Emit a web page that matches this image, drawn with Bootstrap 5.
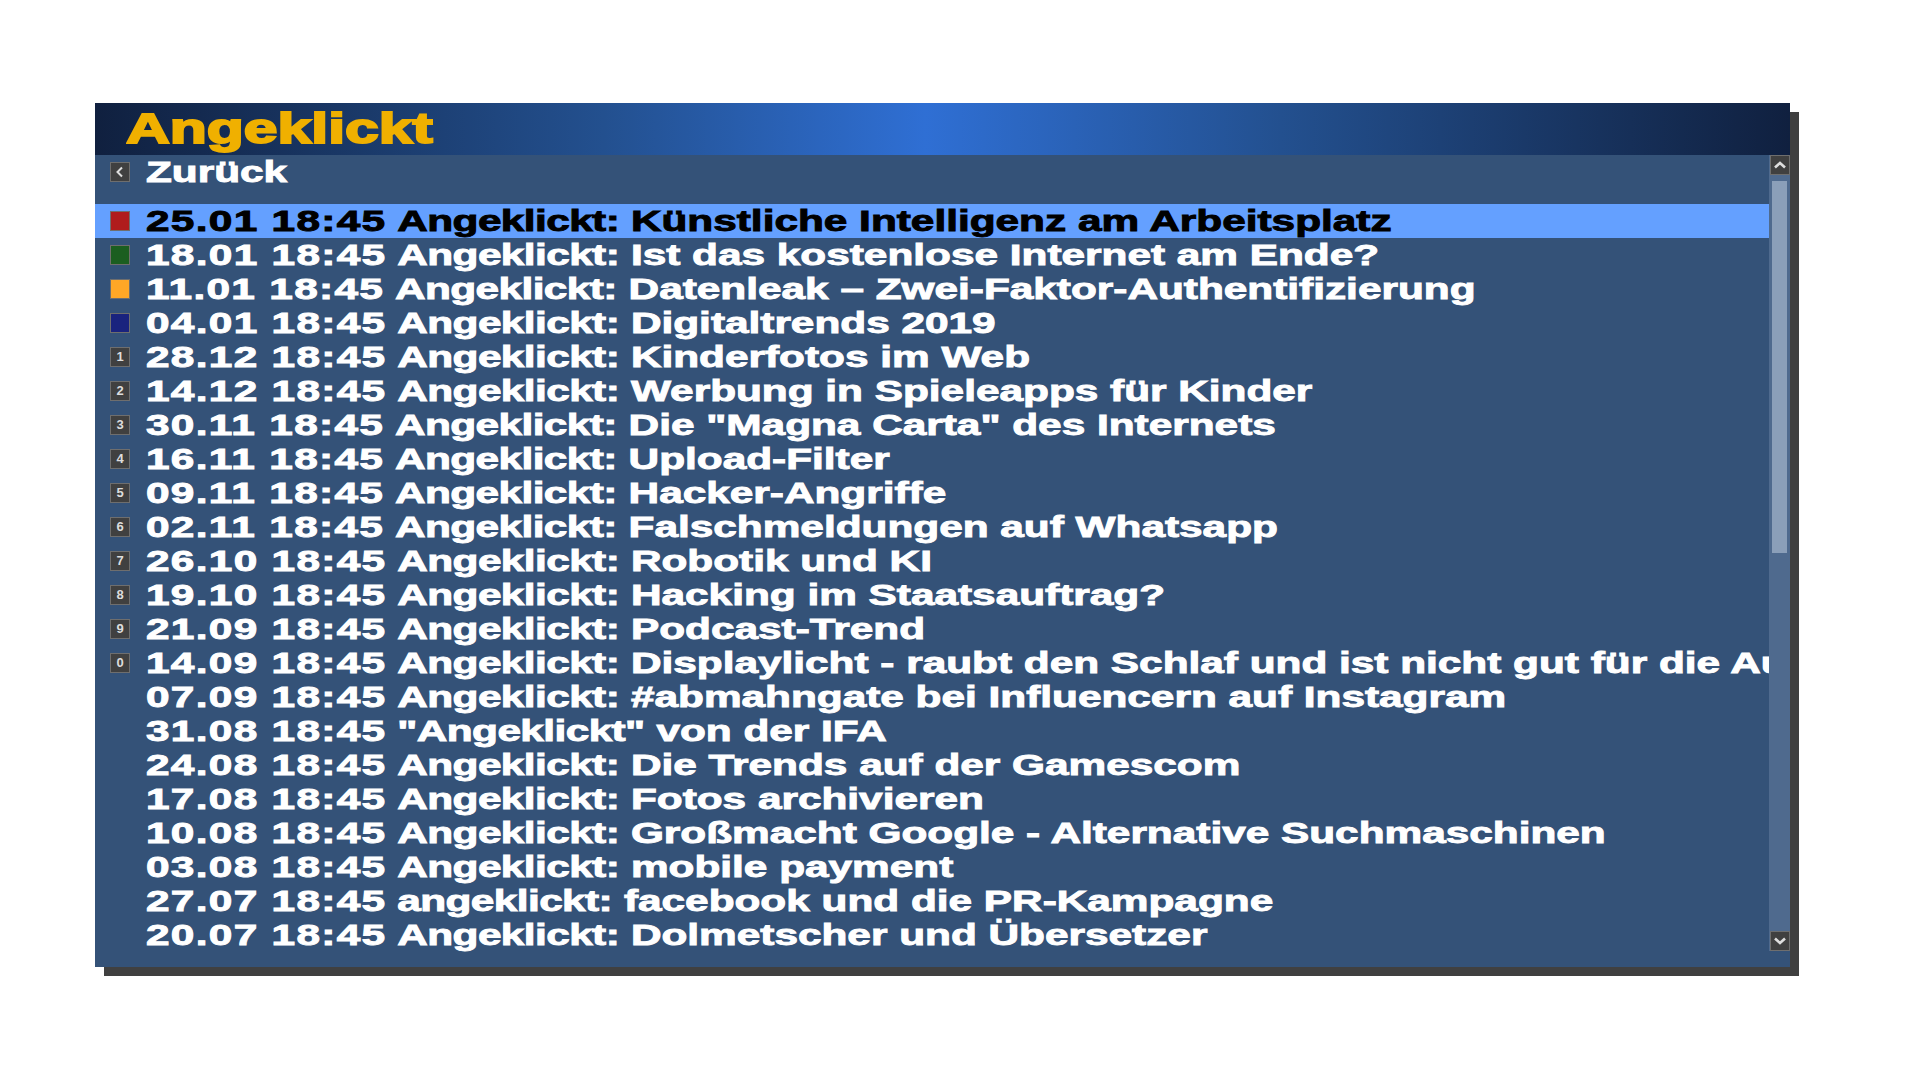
<!DOCTYPE html>
<html lang="de">
<head>
    <meta charset="UTF-8">
    <title>Angeklickt</title>
    <link href="https://cdn.jsdelivr.net/npm/bootstrap@5.3.0/dist/css/bootstrap.min.css" rel="stylesheet">
    <style>
        body { background: #fff; font-family: "Liberation Sans", Arial, sans-serif; }
        .page-wrap { min-height: 100vh; padding: 103px 0 0 95px; }
        .tv-panel { width: 1695px; height: 864px; background: #345278; box-shadow: 9px 9px 0 #404040; }
        .tv-head { height: 52px; background: linear-gradient(90deg, #10203f 0%, #23508f 30%, #2f6fd4 49%, #23508f 70%, #10203f 100%); }
        .tv-title { margin-left: 31px; color: #f0b000; font-size: 43px; line-height: 51px; font-weight: 700; -webkit-text-stroke: 2px #f0b000; transform: scaleX(1.41); transform-origin: left center; white-space: nowrap; width: 240px; }
        .tv-list { width: 1674px; }
        .tv-row { height: 34px; padding-left: 15px; color: #fff; overflow: hidden; }
        .tv-row.back-row { margin-bottom: 15px; }
        .tv-row.active-row { background: #64a0ff; color: #000; }
        .tv-key { width: 20px; height: 20px; flex: none; margin-right: 16px; background: #404040; border: 1px solid #6e6e6e; color: #ddd; font: 700 13px/18px "Liberation Sans", sans-serif; text-align: center; }
        .tv-key svg { display: block; margin: 3px; }
        .key-red { background: #b01c1c; }
        .key-green { background: #1b5e20; }
        .key-orange { background: #ffa726; }
        .key-blue { background: #1a237e; }
        .key-none { background: transparent; border-color: transparent; }
        .tv-text { font-size: 29px; line-height: 34px; font-weight: 700; white-space: nowrap; width: 1040px; flex: none; transform: scaleX(1.46); transform-origin: left center; -webkit-text-stroke: .9px currentColor; }
        .tv-date { letter-spacing: .9px; }
        .tv-tag { letter-spacing: -.4px; margin-left: -1.5px; }
        .tv-scroll { width: 21px; height: 796px; background: #4f6a8e; }
        .tv-btn { width: 20px; height: 20px; margin-left: 1px; background: #404040; border: 1px solid #6e6e6e; flex: none; }
        .tv-track { padding: 6px 3px 0 3px; }
        .tv-thumb { width: 15px; height: 372px; background: #8b9fb9; }
    </style>
</head>
<body>
    <div class="page-wrap">
        <div class="tv-panel">
            <div class="tv-head">
                <div class="tv-title">Angeklickt</div>
            </div>
            <div class="d-flex">
                <div class="tv-list">
                    <div class="tv-row back-row d-flex align-items-center"><span class="tv-key"><svg width="12" height="12" viewBox="0 0 12 12"><path d="M8 1.5 3.5 6 8 10.5" fill="none" stroke="#ddd" stroke-width="2"/></svg></span><span class="tv-text">Zurück</span></div>
                    <div class="tv-row active-row d-flex align-items-center"><span class="tv-key key-red"></span><span class="tv-text"><span class="tv-date">25.01 18:45 </span><span class="tv-tag">Angeklickt:</span> Künstliche Intelligenz am Arbeitsplatz</span></div>
                    <div class="tv-row d-flex align-items-center"><span class="tv-key key-green"></span><span class="tv-text"><span class="tv-date">18.01 18:45 </span><span class="tv-tag">Angeklickt:</span> Ist das kostenlose Internet am Ende?</span></div>
                    <div class="tv-row d-flex align-items-center"><span class="tv-key key-orange"></span><span class="tv-text"><span class="tv-date">11.01 18:45 </span><span class="tv-tag">Angeklickt:</span> Datenleak – Zwei-Faktor-Authentifizierung</span></div>
                    <div class="tv-row d-flex align-items-center"><span class="tv-key key-blue"></span><span class="tv-text"><span class="tv-date">04.01 18:45 </span><span class="tv-tag">Angeklickt:</span> Digitaltrends 2019</span></div>
                    <div class="tv-row d-flex align-items-center"><span class="tv-key">1</span><span class="tv-text"><span class="tv-date">28.12 18:45 </span><span class="tv-tag">Angeklickt:</span> Kinderfotos im Web</span></div>
                    <div class="tv-row d-flex align-items-center"><span class="tv-key">2</span><span class="tv-text"><span class="tv-date">14.12 18:45 </span><span class="tv-tag">Angeklickt:</span> Werbung in Spieleapps für Kinder</span></div>
                    <div class="tv-row d-flex align-items-center"><span class="tv-key">3</span><span class="tv-text"><span class="tv-date">30.11 18:45 </span><span class="tv-tag">Angeklickt:</span> Die "Magna Carta" des Internets</span></div>
                    <div class="tv-row d-flex align-items-center"><span class="tv-key">4</span><span class="tv-text"><span class="tv-date">16.11 18:45 </span><span class="tv-tag">Angeklickt:</span> Upload-Filter</span></div>
                    <div class="tv-row d-flex align-items-center"><span class="tv-key">5</span><span class="tv-text"><span class="tv-date">09.11 18:45 </span><span class="tv-tag">Angeklickt:</span> Hacker-Angriffe</span></div>
                    <div class="tv-row d-flex align-items-center"><span class="tv-key">6</span><span class="tv-text"><span class="tv-date">02.11 18:45 </span><span class="tv-tag">Angeklickt:</span> Falschmeldungen auf Whatsapp</span></div>
                    <div class="tv-row d-flex align-items-center"><span class="tv-key">7</span><span class="tv-text"><span class="tv-date">26.10 18:45 </span><span class="tv-tag">Angeklickt:</span> Robotik und KI</span></div>
                    <div class="tv-row d-flex align-items-center"><span class="tv-key">8</span><span class="tv-text"><span class="tv-date">19.10 18:45 </span><span class="tv-tag">Angeklickt:</span> Hacking im Staatsauftrag?</span></div>
                    <div class="tv-row d-flex align-items-center"><span class="tv-key">9</span><span class="tv-text"><span class="tv-date">21.09 18:45 </span><span class="tv-tag">Angeklickt:</span> Podcast-Trend</span></div>
                    <div class="tv-row d-flex align-items-center"><span class="tv-key">0</span><span class="tv-text"><span class="tv-date">14.09 18:45 </span><span class="tv-tag">Angeklickt:</span> Displaylicht - raubt den Schlaf und ist nicht gut für die Au</span></div>
                    <div class="tv-row d-flex align-items-center"><span class="tv-key key-none"></span><span class="tv-text"><span class="tv-date">07.09 18:45 </span><span class="tv-tag">Angeklickt:</span> #abmahngate bei Influencern auf Instagram</span></div>
                    <div class="tv-row d-flex align-items-center"><span class="tv-key key-none"></span><span class="tv-text"><span class="tv-date">31.08 18:45 </span><span class="tv-tag">"Angeklickt"</span> von der IFA</span></div>
                    <div class="tv-row d-flex align-items-center"><span class="tv-key key-none"></span><span class="tv-text"><span class="tv-date">24.08 18:45 </span><span class="tv-tag">Angeklickt:</span> Die Trends auf der Gamescom</span></div>
                    <div class="tv-row d-flex align-items-center"><span class="tv-key key-none"></span><span class="tv-text"><span class="tv-date">17.08 18:45 </span><span class="tv-tag">Angeklickt:</span> Fotos archivieren</span></div>
                    <div class="tv-row d-flex align-items-center"><span class="tv-key key-none"></span><span class="tv-text"><span class="tv-date">10.08 18:45 </span><span class="tv-tag">Angeklickt:</span> Großmacht Google - Alternative Suchmaschinen</span></div>
                    <div class="tv-row d-flex align-items-center"><span class="tv-key key-none"></span><span class="tv-text"><span class="tv-date">03.08 18:45 </span><span class="tv-tag">Angeklickt:</span> mobile payment</span></div>
                    <div class="tv-row d-flex align-items-center"><span class="tv-key key-none"></span><span class="tv-text"><span class="tv-date">27.07 18:45 </span><span class="tv-tag">angeklickt:</span> facebook und die PR-Kampagne</span></div>
                    <div class="tv-row d-flex align-items-center"><span class="tv-key key-none"></span><span class="tv-text"><span class="tv-date">20.07 18:45 </span><span class="tv-tag">Angeklickt:</span> Dolmetscher und Übersetzer</span></div>
                </div>
                <div class="tv-scroll d-flex flex-column">
                    <div class="tv-btn"><svg class="d-block" width="18" height="18" viewBox="0 0 18 18"><path d="M4 11.5 9 7l5 4.5" fill="none" stroke="#ddd" stroke-width="2.6"/></svg></div>
                    <div class="tv-track flex-grow-1"><div class="tv-thumb"></div></div>
                    <div class="tv-btn"><svg class="d-block" width="18" height="18" viewBox="0 0 18 18"><path d="M4 6.5 9 11l5-4.5" fill="none" stroke="#ddd" stroke-width="2.6"/></svg></div>
                </div>
            </div>
        </div>
    </div>
    <script src="https://cdn.jsdelivr.net/npm/bootstrap@5.3.0/dist/js/bootstrap.bundle.min.js"></script>
</body>
</html>
